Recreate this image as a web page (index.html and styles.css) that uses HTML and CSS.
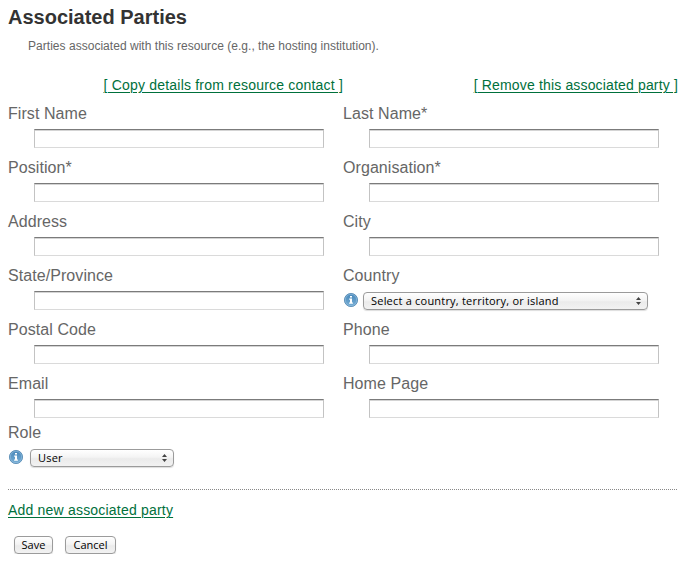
FILE: index.html
```html
<!DOCTYPE html>
<html lang="en">
<head>
<meta charset="utf-8">
<title>Associated Parties</title>
<link rel="stylesheet" href="styles.css">
</head>
<body>
<svg width="0" height="0" class="defs" aria-hidden="true">
  <defs>
    <linearGradient id="blue" x1="0" y1="0" x2="0" y2="1"><stop offset="0" stop-color="#4585b8"/><stop offset="1" stop-color="#78afd6"/></linearGradient>
    <symbol id="info" viewBox="0 0 16 16">
      <circle cx="8" cy="8" r="6.6" fill="url(#blue)" stroke="#5a8db5" stroke-width=".9"/>
      <circle cx="8" cy="8" r="5.7" fill="none" stroke="#8fbbdc" stroke-width=".7"/>
      <path d="M7 4h2v1.6H7zM6.2 6.6H9v4h.9v1.1H6.1v-1.1H7V7.7h-.8z" fill="#fff"/>
    </symbol>
    <symbol id="arrows" viewBox="0 0 5 8"><path d="M0 3 2.5 0 5 3zM0 5h5L2.5 8z" fill="#444"/></symbol>
  </defs>
</svg>
<form class="page">
  <h1>Associated Parties</h1>
  <p class="intro">Parties associated with this resource (e.g., the hosting institution).</p>
  <div class="actions">
    <a href="#" class="copy">[ Copy details from resource contact ]</a>
    <a href="#" class="remove">[ Remove this associated party ]</a>
  </div>
  <div class="grid">
    <label class="field"><span>First Name</span><input type="text"></label>
    <label class="field"><span>Last Name*</span><input type="text"></label>
    <label class="field"><span>Position*</span><input type="text"></label>
    <label class="field"><span>Organisation*</span><input type="text"></label>
    <label class="field"><span>Address</span><input type="text"></label>
    <label class="field"><span>City</span><input type="text"></label>
    <label class="field"><span>State/Province</span><input type="text"></label>
    <div class="field"><span>Country</span>
      <div class="choice"><svg class="info"><use href="#info"/></svg><button type="button" class="select country"><span>Select a country, territory, or island</span><svg class="arrows"><use href="#arrows"/></svg></button></div>
    </div>
    <label class="field"><span>Postal Code</span><input type="text"></label>
    <label class="field"><span>Phone</span><input type="text"></label>
    <label class="field"><span>Email</span><input type="text"></label>
    <label class="field"><span>Home Page</span><input type="text"></label>
  </div>
  <div class="field role"><span>Role</span>
    <div class="choice"><svg class="info"><use href="#info"/></svg><button type="button" class="select user"><span>User</span><svg class="arrows"><use href="#arrows"/></svg></button></div>
  </div>
  <div class="rule"></div>
  <a href="#" class="add">Add new associated party</a>
  <div class="buttons"><button type="button" class="save">Save</button><button type="button" class="cancel">Cancel</button></div>
</form>
</body>
</html>
```
FILE: styles.css
```css
* { box-sizing: border-box; }
body { margin: 0; background: #fff; color: #666; font-family: "Liberation Sans", Arial, sans-serif; font-size: 16px; }
.defs { display: block; height: 0; }
.page { width: 670px; margin: 0 8px; padding-top: 5px; }
h1 { margin: 0; font-size: 20px; line-height: 24px; color: #333; }
.intro { margin: 8px 0 0 20px; font-size: 12px; line-height: 18px; letter-spacing: 0.03px; white-space: nowrap; }
a { color: #00703c; text-decoration: underline; text-decoration-thickness: 1px; text-underline-offset: 2px; white-space: nowrap; letter-spacing: .2px; }
.actions { display: grid; grid-template-columns: 335px 335px; justify-items: end; margin-top: 21px; height: 28px; font-size: 14px; line-height: 18px; }
.remove { letter-spacing: .16px; }
.grid { display: grid; grid-template-columns: 335px 335px; grid-auto-rows: 54px; }
.field { display: block; }
.field > span { display: block; height: 25px; line-height: 19px; letter-spacing: .07px; white-space: nowrap; }
input { display: block; width: 290px; height: 19px; margin: 0 0 0 26px; padding: 0 3px; border: 1px solid #c3c3c3; border-top: 1px solid #7b7b7b; border-bottom-color: #dadada; background: #fff; box-shadow: inset 0 1px #d4d4d4; outline: none; font-size: 12px; }
.choice { display: flex; align-items: center; height: 18px; margin-top: 1px; }
.info { width: 16px; height: 16px; flex: none; margin-top: -2px; }
button { font: 11px/16px "Lucida Grande", "Open Sans", "Noto Sans", sans-serif; color: #000; height: 18px; padding: 0; border: 1px solid #9b9b9b; border-radius: 4px; background: linear-gradient(#fff, #f4f4f4 45%, #ebebeb 55%, #f2f2f2); box-shadow: 0 1px 1px #ddd; white-space: nowrap; }
.select { display: flex; align-items: center; justify-content: space-between; padding: 0 6px 0 7px; letter-spacing: .21px; }
.country { width: 285px; margin-left: 4px; }
.user { width: 144px; margin-left: 6px; }
.arrows { width: 5px; height: 8px; }
.role { height: 66px; margin-top: -5px; }
.rule { height: 1px; background: repeating-linear-gradient(90deg, #888 0 1px, #fff 1px 2px); }
.add { display: block; width: max-content; margin-top: 11px; font-size: 14px; line-height: 18px; }
.buttons { display: flex; gap: 12px; margin: 17px 0 0 6px; }
.save { width: 39px; }
.cancel { width: 51px; }
```
